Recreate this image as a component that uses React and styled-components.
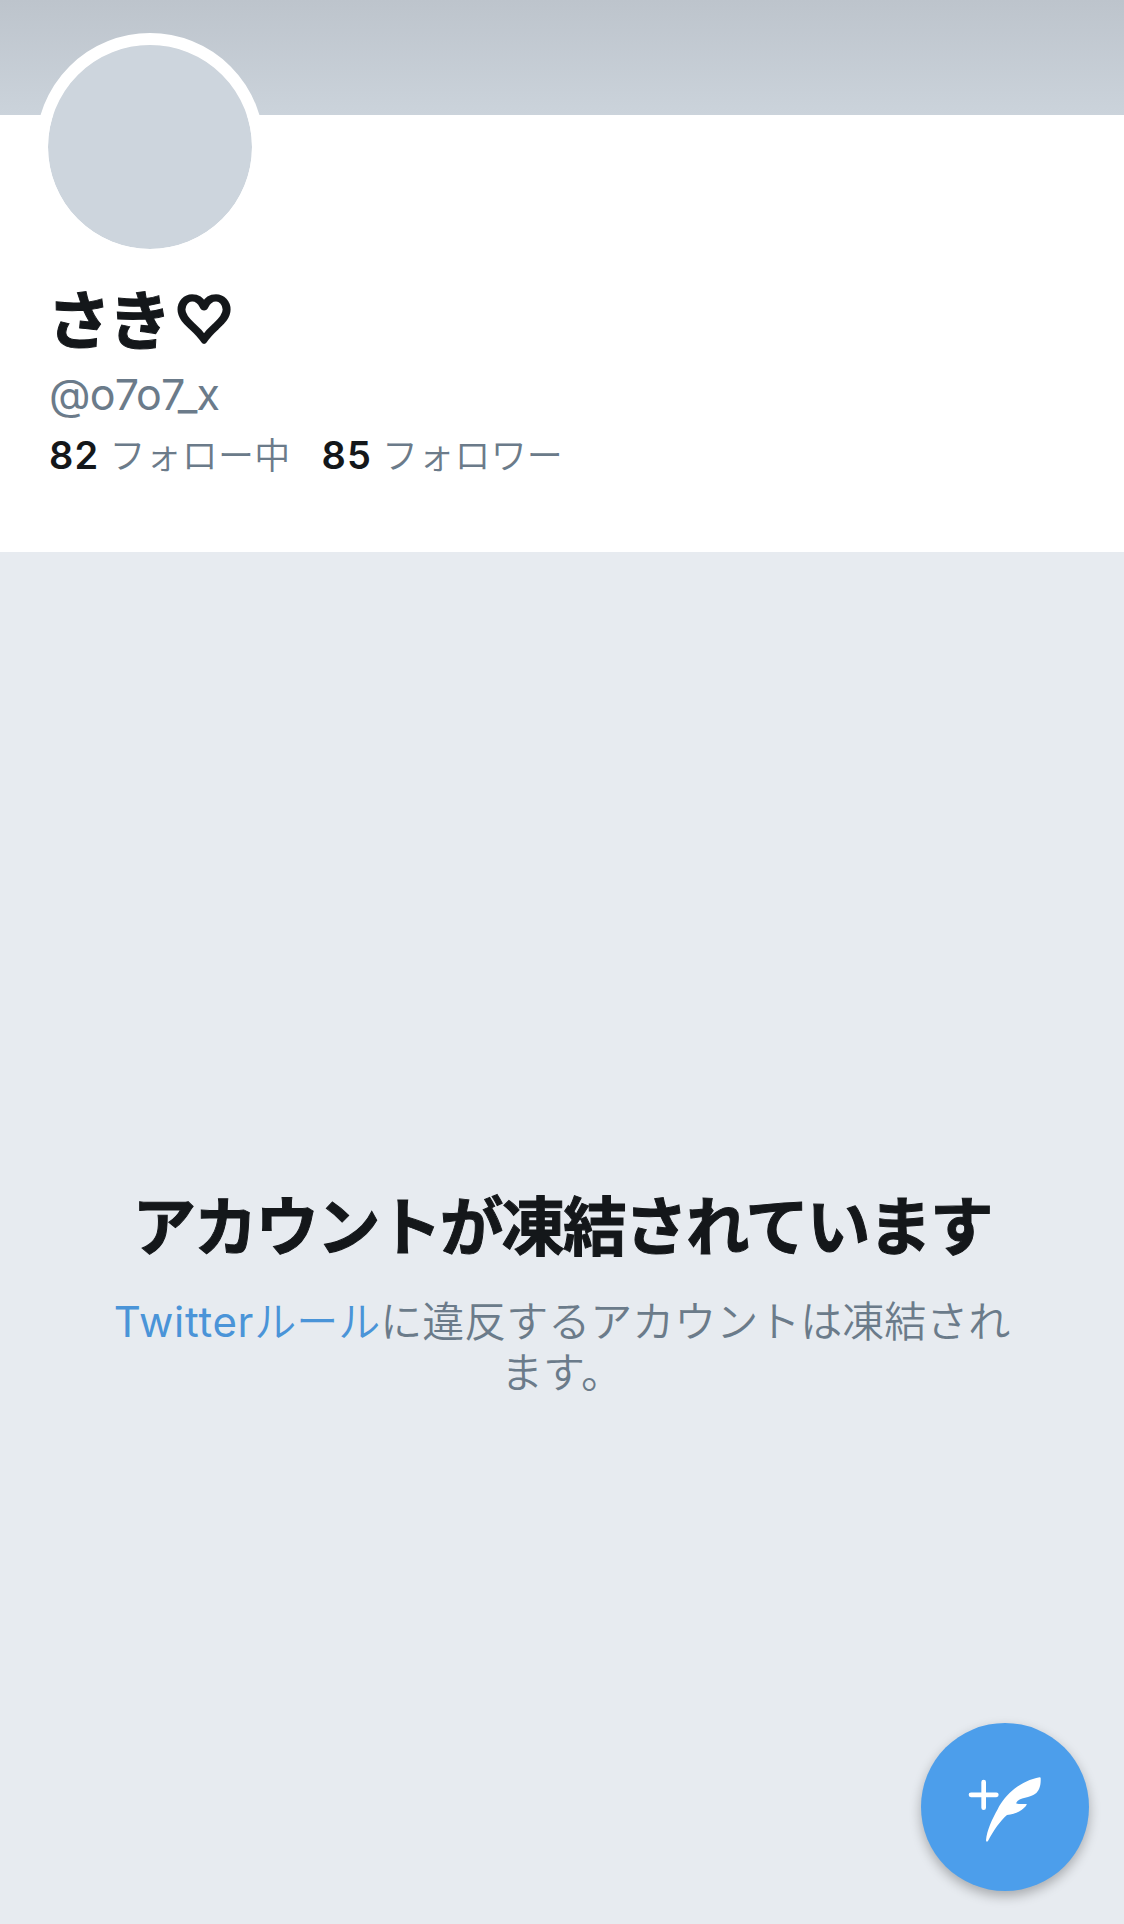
import styled, { createGlobalStyle } from "styled-components"

const GlobalStyle = createGlobalStyle`
  * {
    box-sizing: border-box;
  }
  body {
    margin: 0;
    background-color: #e7ebf0;
    font-family: Inter, "Noto Sans CJK JP", sans-serif;
  }
`
const Container = styled.div`
  display: flex;
  flex-direction: column;
  height: 1924px;
  overflow: hidden;
  background-color: #e7ebf0;
`
const Banner = styled.div`
  height: 115px;
  flex-shrink: 0;
  background: linear-gradient(#bdc4cc, #cbd3db);
`
const Profile = styled.header`
  display: flex;
  flex-direction: column;
  align-items: flex-start;
  height: 437px;
  flex-shrink: 0;
  padding-left: 49px;
  background-color: #fff;
`
const Avatar = styled.div`
  width: 228px;
  height: 228px;
  flex-shrink: 0;
  margin: -82px 0 0 -13px;
  border: 12px solid #fff;
  border-radius: 50%;
  background-color: #cdd5dd;
  background-clip: padding-box;
`
const Name = styled.h1`
  height: 80px;
  margin: 15px 0 0 -2px;
  font-family: "Noto Sans CJK JP", sans-serif;
  font-size: 64px;
  font-weight: 700;
  line-height: 80px;
  letter-spacing: -3px;
  -webkit-text-stroke: 1px #14171a;
  color: #14171a;
`
const Heart = styled.span`
  display: inline-block;
  margin-left: 7px;
  font-size: 56px;
  -webkit-text-stroke: 5.5px #14171a;
  transform: translateY(-3px) scaleY(0.93);
`
const Handle = styled.div`
  margin-top: 12px;
  font-size: 43px;
  line-height: 52px;
  letter-spacing: -0.8px;
  color: #6b7b8a;
`
const Stats = styled.div`
  display: flex;
  gap: 31px;
  margin-top: 10px;
`
const Stat = styled.div`
  display: flex;
  align-items: baseline;
  gap: 10px;
  line-height: 50px;
`
const Count = styled.span`
  font-size: 38px;
  font-weight: 600;
  letter-spacing: 1.2px;
  color: #14171a;
`
const Label = styled.span`
  font-size: 36px;
  font-weight: 350;
  letter-spacing: 0.2px;
  color: #6b7b8a;
`
const Notice = styled.main`
  display: flex;
  flex-direction: column;
  align-items: center;
  padding: 635px 100px 0;
  text-align: center;
`
const Title = styled.h2`
  margin: 0;
  font-size: 63.5px;
  font-weight: 700;
  line-height: 80px;
  letter-spacing: -2px;
  white-space: nowrap;
  -webkit-text-stroke: 1px #14171a;
  color: #14171a;
`
const Message = styled.p`
  margin: 29px 0 0;
  font-size: 42px;
  font-weight: 350;
  line-height: 51px;
  color: #6b7b8a;
`
const RuleLink = styled.a`
  color: #4a94d8;
  text-decoration: none;
`
const Latin = styled.span`
  font-weight: 400;
  letter-spacing: 0.7px;
`
const ComposeButton = styled.button`
  position: fixed;
  right: 35px;
  bottom: 33px;
  display: flex;
  align-items: center;
  justify-content: center;
  width: 168px;
  height: 168px;
  padding: 0;
  border: 0;
  border-radius: 50%;
  background-color: #4c9eeb;
  box-shadow: 0 5px 12px rgba(0, 0, 0, 0.28);
`

const stats = [
  { count: 82, label: "フォロー中" },
  { count: 85, label: "フォロワー" },
]

const FeatherIcon = () => (
  <svg width="110" height="100" viewBox="0 -9 330 300" fill="#fff">
    <path d="M101 66v77M63 104.500h76" stroke="#fff" strokeWidth="14" strokeLinecap="round" />
    <path d="M269 52C214 62 167 101 143 148C126 178 111 211 108 241Q109 248 114 243C131 211 151 182 171 165C199 163 220 151 231 133C221 131 209 134 198 130C208 109 240 116 259 99C270 88 273 72 272 54Q272 52 269 52Z" />
  </svg>
)

const App = () => {
  return (
    <Container>
      <GlobalStyle />
      <Banner />
      <Profile>
        <Avatar />
        <Name>さき<Heart>♡</Heart></Name>
        <Handle>@o7o7_x</Handle>
        <Stats>
          {stats.map((stat) => (
            <Stat key={stat.label}>
              <Count>{stat.count}</Count>
              <Label>{stat.label}</Label>
            </Stat>
          ))}
        </Stats>
      </Profile>
      <Notice>
        <Title>アカウントが凍結されています</Title>
        <Message>
          <RuleLink href="#"><Latin>Twitter</Latin>ルール</RuleLink>に違反するアカウントは凍結され<br />ます。
        </Message>
      </Notice>
      <ComposeButton aria-label="ツイートする">
        <FeatherIcon />
      </ComposeButton>
    </Container>
  )
}

export default App
